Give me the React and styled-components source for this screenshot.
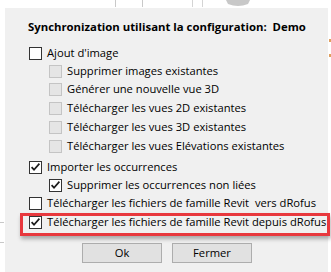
import React from "react";
import styled, { createGlobalStyle } from "styled-components";

const Global = createGlobalStyle`
  html, body { margin: 0; padding: 0; background: #ffffff; }
  body { font-family: "Open Sans", "Noto Sans", sans-serif; color: #000; }
`;

const Screen = styled.div`
  position: relative;
  width: 331px;
  height: 272px;
  overflow: hidden;
  background: #ffffff;
  display: flex;
  align-items: flex-start;
`;

const Backdrop = styled.svg`
  position: absolute;
  left: 0;
  top: 0;
  width: 331px;
  height: 272px;
  pointer-events: none;
`;

const Dialog = styled.div`
  margin: 8px 3px 0 5px;
  width: 323px;
  height: 264px;
  flex: none;
  background: #f0f0f0;
  padding-top: 11px;
  box-sizing: border-box;
  display: flex;
  flex-direction: column;
  position: relative;
`;

const Title = styled.div`
  padding-left: 23px;
  font-size: 11.35px;
  font-weight: 700;
  line-height: 16px;
  white-space: pre;
`;

const Options = styled.div`
  display: flex;
  flex-direction: column;
  margin-top: 12px;
  padding-left: 24px;
`;

const Option = styled.div`
  display: flex;
  align-items: flex-start;
  height: 13px;
  margin-top: ${(p) => p.$gap || 0}px;
  padding-left: ${(p) => (p.$sub ? 20 : 0)}px;
`;

const Box = styled.span`
  flex: none;
  width: 13px;
  height: 13px;
  box-sizing: border-box;
  border: 1px solid ${(p) => (p.$disabled ? "#c4c4c4" : "#333333")};
  background: ${(p) => (p.$disabled ? "#e5e5e5" : "#ffffff")};
  display: flex;
`;

const Label = styled.span`
  margin-left: 5px;
  margin-top: -1px;
  font-size: 11.2px;
  line-height: 13px;
  white-space: pre;
`;

const Buttons = styled.div`
  display: flex;
  justify-content: center;
  gap: 10px;
  margin-top: 14px;
  padding-left: 1px;
`;

const Button = styled.button`
  width: 80px;
  height: 20px;
  box-sizing: border-box;
  border: 1px solid #adadad;
  background: #e1e1e1;
  font-family: inherit;
  font-size: 11.2px;
  line-height: 18px;
  color: #000;
  padding: 0;
  margin: 0;
`;

const Highlight = styled.div`
  position: absolute;
  left: 20px;
  top: 213px;
  width: 310px;
  height: 23px;
  box-sizing: border-box;
  border: 3px solid #e8383d;
  box-shadow: 1px 3px 4px rgba(0, 0, 0, 0.3);
  pointer-events: none;
`;

function Check({ checked, disabled }) {
  return (
    <Box $disabled={disabled}>
      {checked && (
        <svg width="11" height="11" viewBox="0 0 11 11">
          <path d="M1.6 5.2 L4 7.7 L9.4 1.6" fill="none" stroke="#1b1b1b" strokeWidth="1.7" />
        </svg>
      )}
    </Box>
  );
}

const items = [
  { label: "Ajout d'image", gap: 0 },
  { label: "Supprimer images existantes", sub: true, disabled: true, gap: 5 },
  { label: "Générer une nouvelle vue 3D", sub: true, disabled: true, gap: 5 },
  { label: "Télécharger les vues 2D existantes", sub: true, disabled: true, gap: 6 },
  { label: "Télécharger les vues 3D existantes", sub: true, disabled: true, gap: 6 },
  { label: "Télécharger les vues Elévations existantes", sub: true, disabled: true, gap: 6 },
  { label: "Importer les occurrences", checked: true, gap: 8 },
  { label: "Supprimer les occurrences non liées", sub: true, checked: true, gap: 5 },
  { label: "Télécharger les fichiers de famille Revit  vers dRofus", gap: 5 },
  { label: "Télécharger les fichiers de famille Revit depuis dRofus", checked: true, gap: 6 },
];

export default function App() {
  return (
    <>
      <Global />
      <Screen>
        <Backdrop viewBox="0 0 331 272">
          <line x1="115.5" y1="0" x2="115.5" y2="7" stroke="#c9c9c9" />
          <line x1="142.5" y1="0" x2="142.5" y2="7" stroke="#c9c9c9" />
          <line x1="192.5" y1="0" x2="192.5" y2="7" stroke="#d4d4d4" />
          <line x1="202.5" y1="0" x2="202.5" y2="7" stroke="#d4d4d4" />
          <path d="M226 0 L250 0 L248 4 Q238 8 228 4 Z" fill="#c8c8c8" />
          <line x1="0" y1="222.5" x2="4" y2="222.5" stroke="#c8c8c8" />
          <line x1="0" y1="242.5" x2="4" y2="242.5" stroke="#c8c8c8" />
          <rect x="329" y="39" width="2" height="3" fill="#e0a060" />
          <rect x="329" y="54" width="2" height="3" fill="#e0a060" />
        </Backdrop>
        <Dialog>
          <Title>Synchronization utilisant la configuration:  Demo</Title>
          <Options>
            {items.map((it) => (
              <Option key={it.label} $sub={it.sub} $gap={it.gap}>
                <Check checked={it.checked} disabled={it.disabled} />
                <Label>{it.label}</Label>
              </Option>
            ))}
          </Options>
          <Buttons>
            <Button>Ok</Button>
            <Button>Fermer</Button>
          </Buttons>
        </Dialog>
        <Highlight />
      </Screen>
    </>
  );
}
